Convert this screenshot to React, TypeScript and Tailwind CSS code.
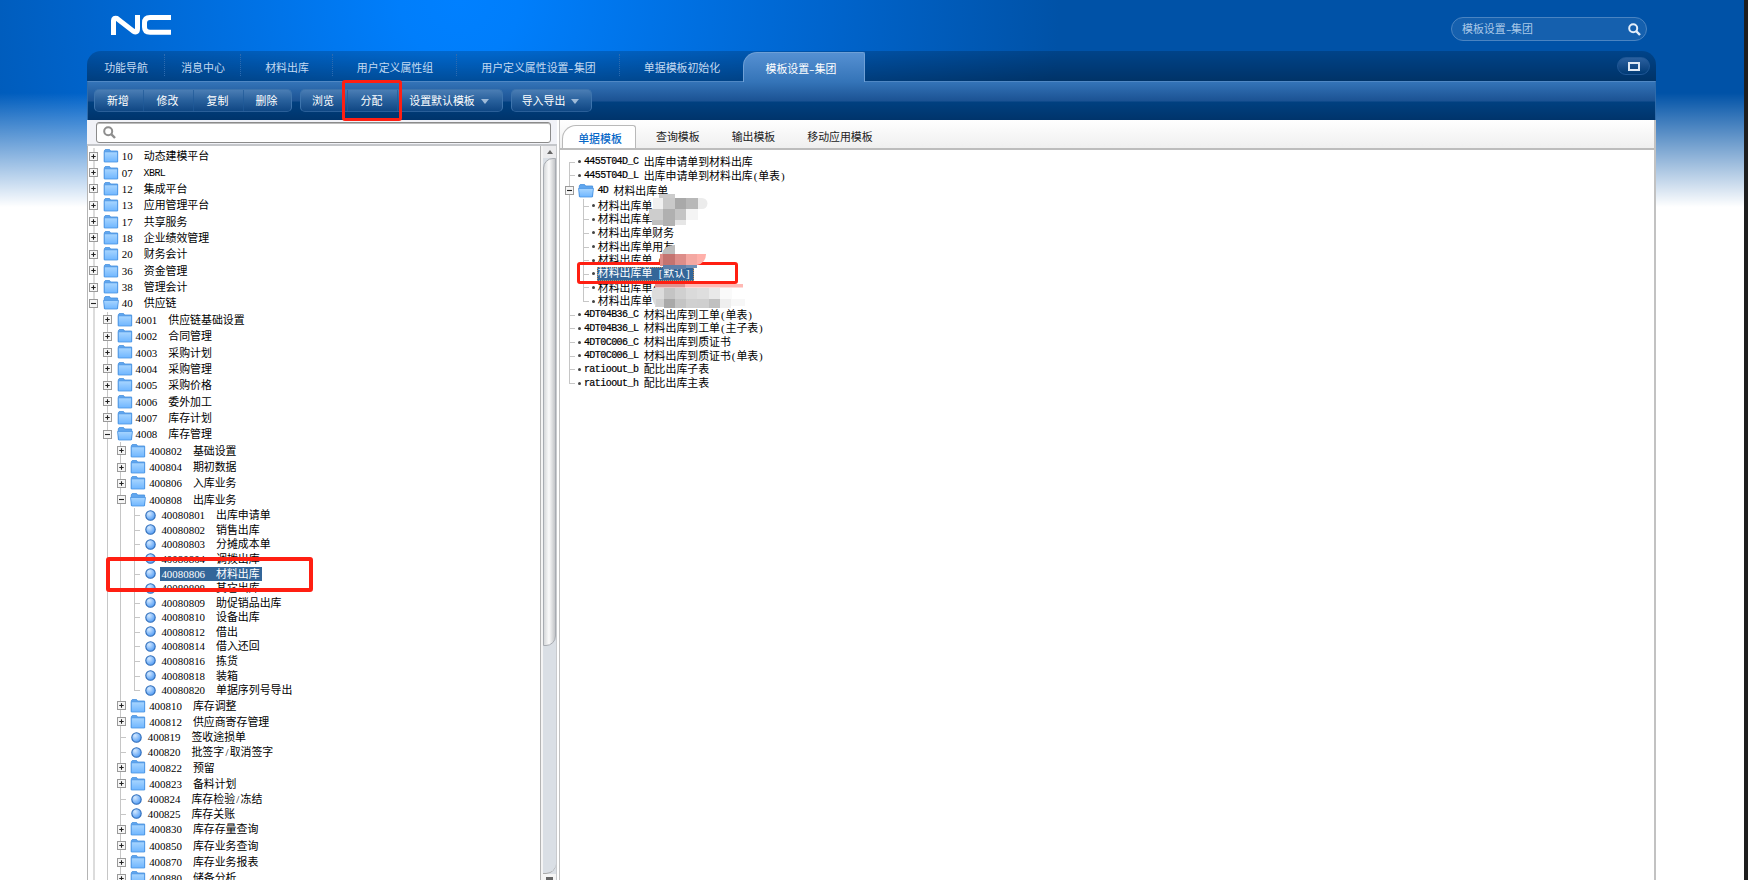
import { ReactNode } from "react";
import clsx from "clsx";

type Node = {
  depth: number;
  kind: "plus" | "minus" | "leaf";
  code: string;
  name: string;
  selected?: boolean;
  last?: boolean;
};

const functionTree: Node[] = [
  { depth: 0, kind: "plus", code: "10", name: "动态建模平台" },
  { depth: 0, kind: "plus", code: "07", name: "XBRL" },
  { depth: 0, kind: "plus", code: "12", name: "集成平台" },
  { depth: 0, kind: "plus", code: "13", name: "应用管理平台" },
  { depth: 0, kind: "plus", code: "17", name: "共享服务" },
  { depth: 0, kind: "plus", code: "18", name: "企业绩效管理" },
  { depth: 0, kind: "plus", code: "20", name: "财务会计" },
  { depth: 0, kind: "plus", code: "36", name: "资金管理" },
  { depth: 0, kind: "plus", code: "38", name: "管理会计" },
  { depth: 0, kind: "minus", code: "40", name: "供应链" },
  { depth: 1, kind: "plus", code: "4001", name: "供应链基础设置" },
  { depth: 1, kind: "plus", code: "4002", name: "合同管理" },
  { depth: 1, kind: "plus", code: "4003", name: "采购计划" },
  { depth: 1, kind: "plus", code: "4004", name: "采购管理" },
  { depth: 1, kind: "plus", code: "4005", name: "采购价格" },
  { depth: 1, kind: "plus", code: "4006", name: "委外加工" },
  { depth: 1, kind: "plus", code: "4007", name: "库存计划" },
  { depth: 1, kind: "minus", code: "4008", name: "库存管理" },
  { depth: 2, kind: "plus", code: "400802", name: "基础设置" },
  { depth: 2, kind: "plus", code: "400804", name: "期初数据" },
  { depth: 2, kind: "plus", code: "400806", name: "入库业务" },
  { depth: 2, kind: "minus", code: "400808", name: "出库业务" },
  { depth: 3, kind: "leaf", code: "40080801", name: "出库申请单" },
  { depth: 3, kind: "leaf", code: "40080802", name: "销售出库" },
  { depth: 3, kind: "leaf", code: "40080803", name: "分摊成本单" },
  { depth: 3, kind: "leaf", code: "40080804", name: "调拨出库" },
  { depth: 3, kind: "leaf", code: "40080806", name: "材料出库", selected: true },
  { depth: 3, kind: "leaf", code: "40080808", name: "其它出库" },
  { depth: 3, kind: "leaf", code: "40080809", name: "助促销品出库" },
  { depth: 3, kind: "leaf", code: "40080810", name: "设备出库" },
  { depth: 3, kind: "leaf", code: "40080812", name: "借出" },
  { depth: 3, kind: "leaf", code: "40080814", name: "借入还回" },
  { depth: 3, kind: "leaf", code: "40080816", name: "拣货" },
  { depth: 3, kind: "leaf", code: "40080818", name: "装箱" },
  { depth: 3, kind: "leaf", code: "40080820", name: "单据序列号导出", last: true },
  { depth: 2, kind: "plus", code: "400810", name: "库存调整" },
  { depth: 2, kind: "plus", code: "400812", name: "供应商寄存管理" },
  { depth: 2, kind: "leaf", code: "400819", name: "签收途损单" },
  { depth: 2, kind: "leaf", code: "400820", name: "批签字/取消签字" },
  { depth: 2, kind: "plus", code: "400822", name: "预留" },
  { depth: 2, kind: "plus", code: "400823", name: "备料计划" },
  { depth: 2, kind: "leaf", code: "400824", name: "库存检验/冻结" },
  { depth: 2, kind: "leaf", code: "400825", name: "库存关账" },
  { depth: 2, kind: "plus", code: "400830", name: "库存存量查询" },
  { depth: 2, kind: "plus", code: "400850", name: "库存业务查询" },
  { depth: 2, kind: "plus", code: "400870", name: "库存业务报表" },
  { depth: 2, kind: "plus", code: "400880", name: "储备分析" },
];

const templateTree: Node[] = [
  { depth: 0, kind: "leaf", code: "4455T04D_C", name: "出库申请单到材料出库" },
  { depth: 0, kind: "leaf", code: "4455T04D_L", name: "出库申请单到材料出库(单表)" },
  { depth: 0, kind: "minus", code: "4D", name: "材料出库单" },
  { depth: 1, kind: "leaf", code: "", name: "材料出库单" },
  { depth: 1, kind: "leaf", code: "", name: "材料出库单" },
  { depth: 1, kind: "leaf", code: "", name: "材料出库单财务" },
  { depth: 1, kind: "leaf", code: "", name: "材料出库单用友" },
  { depth: 1, kind: "leaf", code: "", name: "材料出库单 (" },
  { depth: 1, kind: "leaf", code: "", name: "材料出库单 [默认]", selected: true },
  { depth: 1, kind: "leaf", code: "", name: "材料出库单(" },
  { depth: 1, kind: "leaf", code: "", name: "材料出库单", last: true },
  { depth: 0, kind: "leaf", code: "4DT04B36_C", name: "材料出库到工单(单表)" },
  { depth: 0, kind: "leaf", code: "4DT04B36_L", name: "材料出库到工单(主子表)" },
  { depth: 0, kind: "leaf", code: "4DT0C006_C", name: "材料出库到质证书" },
  { depth: 0, kind: "leaf", code: "4DT0C006_L", name: "材料出库到质证书(单表)" },
  { depth: 0, kind: "leaf", code: "ratioout_b", name: "配比出库子表" },
  { depth: 0, kind: "leaf", code: "ratioout_h", name: "配比出库主表", last: true },
];

const tabs = [
  { label: "功能导航", width: "w-[78px]", dotted: true },
  { label: "消息中心", width: "w-[76px]", dotted: true },
  { label: "材料出库", width: "w-[92px]", dotted: true },
  { label: "用户定义属性组", width: "w-[124px]", dotted: true },
  { label: "用户定义属性设置-集团", width: "w-[163px]", dotted: true },
  { label: "单据模板初始化", width: "w-[123px]", dotted: false },
];

// latin characters take exactly half of a chinese one
function Half({ text }: { text: string }) {
  return (
    <>
      {text.split(/([ -~])/).map((part, i) =>
        /^[ -~]$/.test(part) ? (
          <span
            key={i}
            className={clsx(
              "inline-flex w-[5.46px] justify-center whitespace-pre",
              /[A-Z]/.test(part) && "font-['Liberation_Mono'] text-[10px]",
              part === "-" && "scale-x-150"
            )}
          >
            {part}
          </span>
        ) : (
          part
        )
      )}
    </>
  );
}

function Folder({ open }: { open: boolean }) {
  return (
    <svg className="shrink-0" width="16" height="14" viewBox="0 0 16 14">
      <defs>
        <linearGradient id="folder" x1="0" y1="0" x2="0" y2="1">
          <stop offset="0" stopColor="#a9d6ff" />
          <stop offset="1" stopColor="#6fb6ff" />
        </linearGradient>
      </defs>
      <path d="M1.3 12.5V1.8L2.2 0.6h4.4l1 1.4h7v10.5z" fill="#62a8f0" stroke="#3f8bdc" strokeWidth="0.8" />
      {open ? (
        <path d="M0.5 4.4h15l-1.2 8.6H1.7z" fill="url(#folder)" stroke="#4a94e2" strokeWidth="0.8" />
      ) : (
        <path d="M1.3 2.8h13.3v10.2H1.3z" fill="url(#folder)" stroke="#4a94e2" strokeWidth="0.8" />
      )}
    </svg>
  );
}

function Expander({ open }: { open: boolean }) {
  return (
    <svg className="relative block" width="9" height="9" viewBox="0 0 9 9">
      <rect x="0.5" y="0.5" width="8" height="8" fill="#f6f6f6" stroke="#9a9a9a" />
      <path d={open ? "M2 4.5h5" : "M2.3 4.5h4.4M4.5 2.3v4.4"} stroke="#222" strokeWidth="1.1" />
    </svg>
  );
}

function Ball() {
  return (
    <svg className="shrink-0" width="11" height="11" viewBox="0 0 11 11">
      <defs>
        <radialGradient id="ball" cx="0.35" cy="0.3" r="0.75">
          <stop offset="0" stopColor="#d4e9ff" />
          <stop offset="1" stopColor="#4f9bf5" />
        </radialGradient>
      </defs>
      <circle cx="5.5" cy="5.5" r="4.7" fill="url(#ball)" stroke="#2f6dba" strokeWidth="1.1" />
    </svg>
  );
}

function Guide({ children, thick }: { children?: ReactNode; thick?: boolean }) {
  return (
    <div className="relative flex h-full w-[13.67px] shrink-0 items-center justify-center">
      <div className={clsx("absolute inset-y-0 left-[6px]", thick ? "w-0.5 bg-[#dcdcdc]" : "w-px bg-[#c6c6c6]")} />
      {children}
    </div>
  );
}

function LeafGuide({ last, first }: { last?: boolean; first?: boolean }) {
  return (
    <div className="relative h-full w-[13.67px] shrink-0">
      <div
        className={clsx(
          "absolute left-[6px] w-px bg-[#c6c6c6]",
          last ? "top-0 h-1/2" : first ? "bottom-0 h-1/2" : "inset-y-0"
        )}
      />
      <div className="absolute left-[6px] top-1/2 h-px w-[6px] bg-[#c6c6c6]" />
    </div>
  );
}

function FunctionRow({ node }: { node: Node }) {
  const leaf = node.kind === "leaf";
  return (
    <div className={clsx("flex shrink-0 items-center", leaf ? "h-[14.58px]" : "h-[16.36px]")}>
      {Array.from({ length: node.depth }, (_, i) => (
        <Guide key={i} thick={i === 0} />
      ))}
      {leaf ? (
        <LeafGuide last={node.last} />
      ) : (
        <Guide thick={node.depth === 0}>
          <Expander open={node.kind === "minus"} />
        </Guide>
      )}
      <div className={clsx("flex items-center", leaf ? "pl-[3.2px]" : "pl-[2.2px]")}>
        {leaf ? <Ball /> : <Folder open={node.kind === "minus"} />}
        <div
          className={clsx(
            "flex items-center whitespace-nowrap px-px pt-px",
            leaf ? "ml-[4.6px] h-[14px]" : "ml-[2px]",
            node.selected && "bg-[#336699] pr-[2px] text-white"
          )}
        >
          <span className="mr-[11px]">
            <Half text={node.code} />
          </span>
          <span>
            <Half text={node.name} />
          </span>
        </div>
      </div>
    </div>
  );
}

function TemplateRow({ node, first }: { node: Node; first?: boolean }) {
  const leaf = node.kind === "leaf";
  return (
    <div className={clsx("flex shrink-0 items-center", leaf ? "h-[13.66px]" : "h-[16.4px]")}>
      {node.depth === 1 && <Guide />}
      {leaf ? (
        <LeafGuide last={node.last} first={first} />
      ) : (
        <Guide>
          <Expander open />
        </Guide>
      )}
      {leaf ? (
        <span className="ml-[1.5px] mr-[3px] size-[3px] shrink-0 rounded-full bg-[#444]" />
      ) : (
        <span className="ml-[1.5px] mr-[3.5px] flex">
          <Folder open />
        </span>
      )}
      <div
        className={clsx(
          "flex h-[13.6px] items-center whitespace-nowrap",
          node.selected && "-ml-px border border-dotted border-[#c89058] bg-[#336699] pr-[2px] text-white",
          !node.selected && "pt-px"
        )}
      >
        {node.code && (
          <span className="mr-[5px] font-['Liberation_Mono'] text-[10px] [-webkit-text-stroke:0.2px]">
            <Half text={node.code} />
          </span>
        )}
        <span>
          <Half text={node.name} />
        </span>
      </div>
    </div>
  );
}

function ToolButton({ label, width, arrow, divided }: { label: string; width: string; arrow?: boolean; divided?: boolean }) {
  return (
    <div
      className={clsx(
        "flex h-full items-center justify-center gap-[6px] pr-[2px] pt-[2px] text-white",
        width,
        divided && "border-r border-[#1f5a98]/70"
      )}
    >
      {label}
      {arrow && <span className="-mt-px border-x-4 border-t-[5px] border-x-transparent border-t-[#9fbbd9]" />}
    </div>
  );
}

function ToolGroup({ children }: { children: ReactNode }) {
  return (
    <div className="flex h-[23px] rounded-[5px] border border-[#3d74ad] border-b-[#2a5f99] bg-linear-to-b from-[#4a7db4] via-[#28609c] via-50% to-[#0f4784]">
      {children}
    </div>
  );
}

function SearchGlyph({ className }: { className: string }) {
  return (
    <svg className={className} width="13" height="13" viewBox="0 0 13 13" fill="none" stroke="currentColor">
      <circle cx="5.2" cy="5.2" r="4" strokeWidth="2" />
      <path d="M8.2 8.2l3.8 3.8" strokeWidth="2.4" />
    </svg>
  );
}

// x, y, width, height, colour
const blocks: [number, number, number, number, string][] = [
  [19, 4, 16, 4, "#cccccc"],
  [13, 8, 10.5, 11, "#f0f0f0"],
  [23, 8, 12, 11, "#c9c9c9"],
  [35, 8, 11, 11, "#a9a9a9"],
  [46, 8, 12, 11, "#b8b8b8"],
  [9, 19, 14, 11, "#cdcdcd"],
  [23, 19, 12, 11, "#b0b0b0"],
  [35, 19, 11, 11, "#c4c4c4"],
  [46, 19, 12, 11, "#f4f4f4"],
  [12, 30, 11, 5, "#c0c0c0"],
  [23, 30, 12, 6, "#b2b2b2"],
  [35, 30, 11, 5, "#e6e6e6"],
  [20, 64, 3, 12, "#de8c88"],
  [23, 64, 12, 11, "#c47370"],
  [35, 64, 11, 11, "#dd8d89"],
  [46, 64, 11, 11, "#f4a8a2"],
  [23, 75, 23, 4, "#5f7fa9"],
  [46, 75, 11, 3, "#7290b6"],
  [15, 94, 30, 3.5, "#dd9490"],
  [45, 94, 58, 3.5, "#ffb9b4"],
  [13, 98, 11, 11, "#dcdcdc"],
  [24, 98, 11, 11, "#c4c4c4"],
  [35, 98, 11, 11, "#d0d0d0"],
  [46, 98, 11, 11, "#dadada"],
  [57, 98, 12, 11, "#dedede"],
  [69, 98, 11, 11, "#e9e9e9"],
  [80, 98, 12, 11, "#fafafa"],
  [15, 109, 9, 8, "#d0d0d0"],
  [24, 109, 11, 9, "#a9a9a9"],
  [35, 109, 11, 9, "#c4c4c4"],
  [46, 109, 11, 9, "#d0d0d0"],
  [57, 109, 12, 9, "#cfcfcf"],
  [69, 109, 11, 9, "#c0c0c0"],
  [80, 109, 11, 9, "#eeeeee"],
  [91, 109, 14, 7, "#f7f7f7"],
];

function Mosaic() {
  return (
    <svg className="absolute left-[640px] top-[190px]" width="112" height="122" viewBox="0 0 112 122">
      {blocks.map(([x, y, width, height, fill], i) => (
        <rect key={i} x={x} y={y} width={width} height={height} fill={fill} />
      ))}
      <path d="M58 8h4a5.5 5.5 0 0 1 0 11h-4z" fill="#ececec" />
      <path d="M13 98q-4 8 3 19v-19z" fill="#dcdcdc" />
      <path d="M22 64q2-9 13-9v9z" fill="#bdbdbd" />
      <path d="M57 64h9q0 9-9 11z" fill="#ffb0aa" />
    </svg>
  );
}

export default function App() {
  return (
    <div className="relative flex h-[880px] w-[1748px] overflow-hidden bg-[#1e1e1e] font-['Liberation_Serif','Noto_Sans_CJK_SC',sans-serif] text-[10.92px] leading-none text-black">
      <div className="h-full w-[1744px] bg-[linear-gradient(to_bottom,transparent_93px,#fff_207px),radial-gradient(circle_600px_at_460px_0,#0080ff_0%,#007efb_10%,#0064cc_62%,#0052a7_100%)] pl-[87px]">
        <div className="flex h-full w-[1569px] flex-col">
          <header className="flex h-[51px] shrink-0 justify-between">
            <svg className="ml-6 mt-[15px]" width="60" height="20" viewBox="0 0 60 20" fill="none" stroke="#fff" strokeWidth="5">
              <path d="M2.5 20V5.5Q2.5 2.5 6 3.5L22 16Q26.5 18.5 26.5 14V0" />
              <path d="M60 2.5H39Q33.5 2.5 33.5 8v4Q33.5 17.2 39 17.2H60" />
            </svg>
            <div className="mr-[9px] mt-[17px] flex h-6 w-[196px] items-center justify-between rounded-full border border-[#4a84c2] bg-[#1560ae] pl-[10px] pr-[5px] text-[#a9c8e8]">
              <span>
                <Half text="模板设置-集团" />
              </span>
              <SearchGlyph className="text-[#e4eefa]" />
            </div>
          </header>

          <nav className="flex h-[30px] shrink-0 justify-between rounded-t-[14px] bg-linear-to-b from-black/18 to-black/38 text-[#c3daf2]">
            <div className="flex">
              {tabs.map((tab) => (
                <div key={tab.label} className={clsx("flex pt-[3px]", tab.width)}>
                  <div className="flex h-[29px] flex-1 items-center justify-center pl-px">
                    <span>
                      <Half text={tab.label} />
                    </span>
                  </div>
                  {tab.dotted && <div className="h-[22px] border-r border-dotted border-[#2d6bb0]" />}
                </div>
              ))}
              <div className="z-10 mt-[1px] flex h-[30px] w-[122px] items-center justify-center rounded-tl-[14px] rounded-tr-[2px] border border-b-0 border-[#6fa0d6] bg-linear-to-b from-[#5590d2] to-[#3474b8] pr-[6px] pt-[3px] text-white">
                <span>
                  <Half text="模板设置-集团" />
                </span>
              </div>
            </div>
            <div className="mr-[6px] mt-[6px] flex h-[18px] w-[33px] items-center justify-center rounded-full border border-[#1f5796] bg-linear-to-b from-[#2a609f] to-[#003a75]">
              <div className="h-[9px] w-[12px] border-2 border-[#dfe9f5]" />
            </div>
          </nav>

          <div className="flex h-[39px] shrink-0 gap-[8px] border-x border-t border-x-[#2f6baa] border-t-[#5088c4] bg-[linear-gradient(to_bottom,#3474b8_0,#1b5293_19px,#004080_20px,#00346b_100%)] pl-[6px] pt-[7px]">
            <ToolGroup>
              <ToolButton label="新增" width="w-[49px]" divided />
              <ToolButton label="修改" width="w-[50px]" divided />
              <ToolButton label="复制" width="w-[50px]" divided />
              <ToolButton label="删除" width="w-[47px]" />
            </ToolGroup>
            <ToolGroup>
              <ToolButton label="浏览" width="w-[47px]" divided />
              <ToolButton label="分配" width="w-[50px]" divided />
              <ToolButton label="设置默认模板" width="w-[104px]" arrow />
            </ToolGroup>
            <ToolGroup>
              <ToolButton label="导入导出" width="w-[79px]" arrow />
            </ToolGroup>
          </div>

          <main className="flex min-h-0 flex-1 bg-white">
            <section className="flex w-[470px] shrink-0 flex-col">
              <div className="h-[26px] shrink-0 border-b-2 border-[#c4c6ca] bg-[#f1f2f7] pl-[9px] pt-[2px]">
                <div className="flex h-[21px] w-[455px] items-center rounded-[3px] border border-[#8b8b8b] bg-white pl-[6px] shadow-[inset_0_1px_0_#bbb]">
                  <SearchGlyph className="text-[#8e8e8e]" />
                </div>
              </div>
              <div className="flex min-h-0 flex-1">
                <div className="w-[454px] overflow-hidden border-x border-[#b4b4b4] pt-[2px]">
                  <div className="-ml-px flex flex-col">
                    {functionTree.map((node) => (
                      <FunctionRow key={node.code} node={node} />
                    ))}
                  </div>
                </div>
                <div className="flex flex-1 flex-col border-r border-[#c9cbce] bg-[linear-gradient(to_right,#f4f4f4_2px,#dadfe5_2px)] pl-[2px]">
                  <div className="flex h-[12px] shrink-0 items-center justify-center bg-[#ececee]">
                    <span className="border-x-[3px] border-b-4 border-x-transparent border-b-[#666]" />
                  </div>
                  <div className="h-[488px] shrink-0 rounded-br-[10px] rounded-tl-[10px] border border-[#a8acb2] bg-linear-to-r from-[#d6d8da] via-[#fbfbfb] via-45% to-[#c3c5c8]" />
                  <div className="flex-1 rounded-br-[10px] border-b border-[#aaa]" />
                  <div className="flex h-[6px] shrink-0 items-end justify-center bg-[#f5f5f5]">
                    <span className="h-[3px] w-[7px] bg-[#666]" />
                  </div>
                </div>
              </div>
            </section>

            <section className="ml-[2px] flex flex-1 flex-col border-l border-r-2 border-[#c2c2c2]">
              <div className="flex h-[30px] shrink-0 items-end border-b-2 border-[#bcbcbc] bg-linear-to-b from-white to-[#efefef] pl-[2px] text-[#222]">
                <div className="flex h-[23px] w-[74px] items-center justify-center rounded-tl-[14px] rounded-tr-[3px] border border-b-0 border-[#b9b9b9] bg-white pl-[2px] pt-[4px] font-medium text-[#0868c8]">
                  单据模板
                </div>
                <div className="flex h-[23px] items-center gap-[32px] pl-[20px] pt-[2px]">
                  <span>查询模板</span>
                  <span>输出模板</span>
                  <span>移动应用模板</span>
                </div>
              </div>
              <div className="flex flex-col pl-[3px] pt-[5px]">
                {templateTree.map((node, i) => (
                  <TemplateRow key={i} node={node} first={i === 0} />
                ))}
              </div>
            </section>
          </main>
        </div>
      </div>

      {/* red marks */}
      <div className="absolute left-[342px] top-[80px] z-20 h-[41px] w-[60px] rounded-[3px] border-[3px] border-[#ff1f12]" />
      <div className="absolute left-[106px] top-[557px] h-[35px] w-[207px] rounded-[3px] border-4 border-[#ff1f12]" />
      <div className="absolute left-[577px] top-[262px] h-[22px] w-[161px] rounded-[3px] border-[3px] border-[#ff1f12]" />
      <Mosaic />
    </div>
  );
}
